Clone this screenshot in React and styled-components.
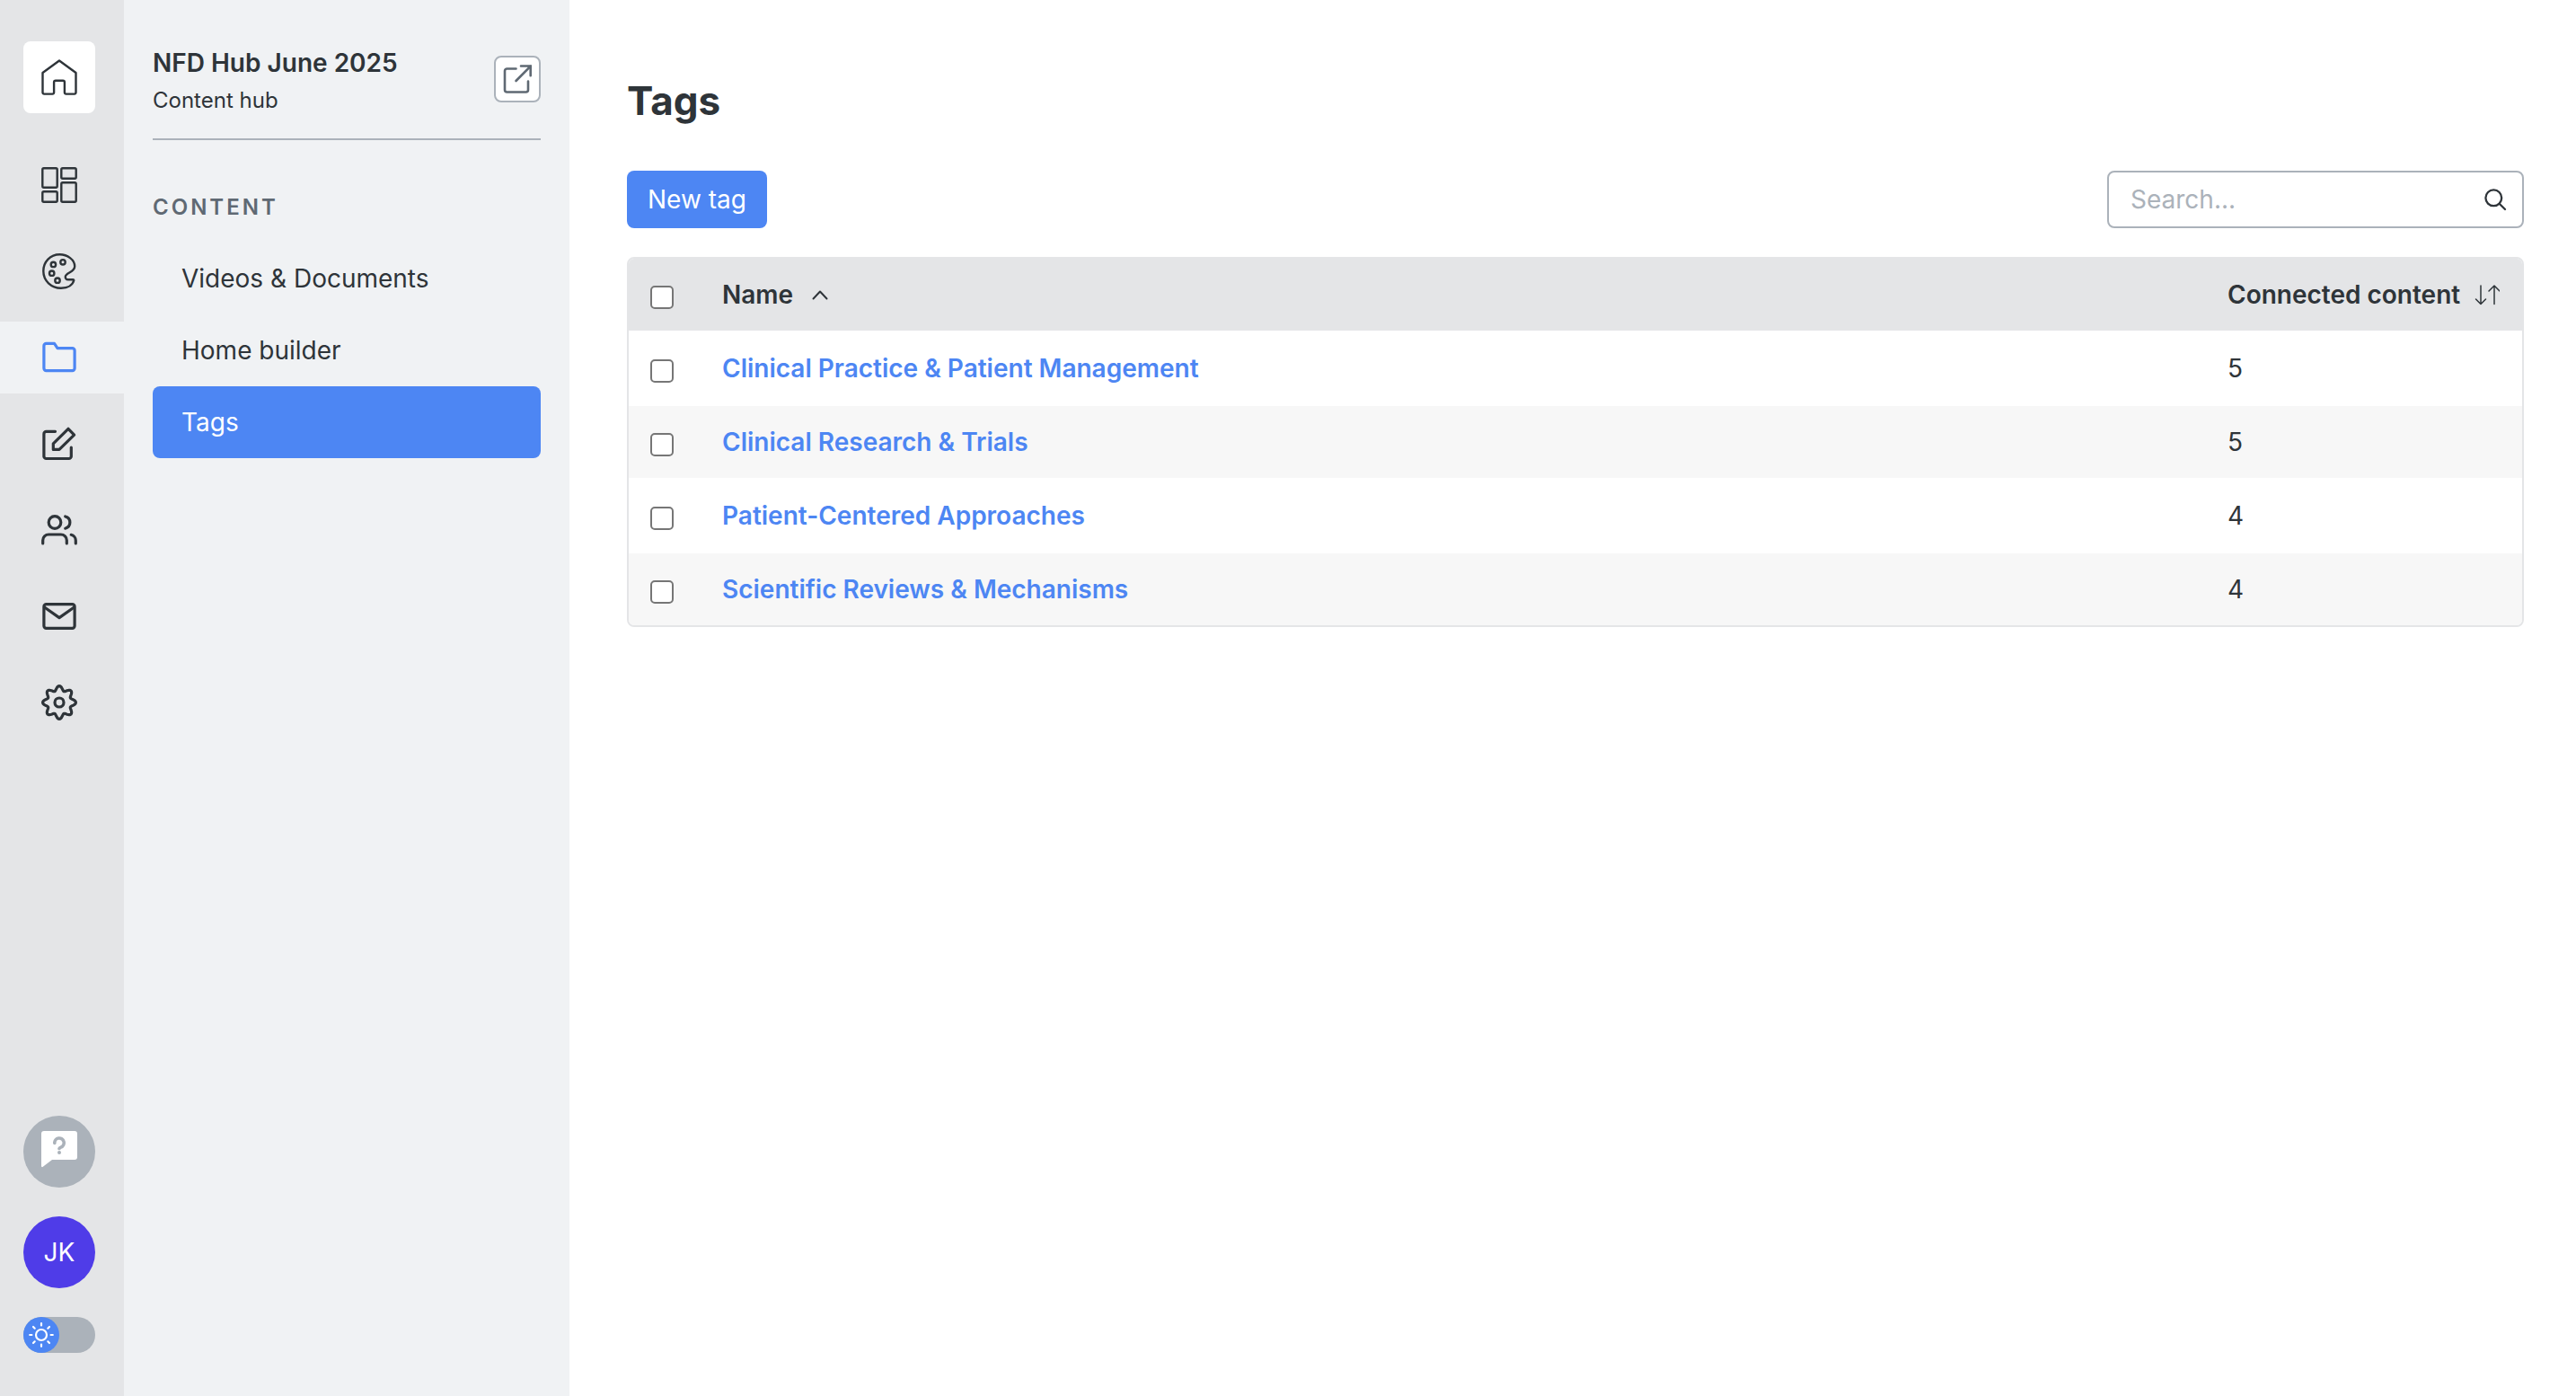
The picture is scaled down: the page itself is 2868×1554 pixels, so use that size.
import React from "react";
import styled, { createGlobalStyle, css } from "styled-components";

const c = {
  text: "#2e3439",
  muted: "#5f6973",
  line: "#abb2ba",
  rail: "#e4e5e7",
  panel: "#f0f2f4",
  blue: "#4d86f3",
  stripe: "#f7f7f7",
  white: "#ffffff",
  avatar: "#4f3ce8",
};

const Global = createGlobalStyle`
  *, *::before, *::after { box-sizing: border-box; }
  body {
    margin: 0;
    background: ${c.white};
    color: ${c.text};
    font-family: Inter, "Liberation Sans", sans-serif;
    font-size: 28px;
    line-height: 40px;
  }
  button, input { font: inherit; color: inherit; }
  a { color: inherit; text-decoration: none; }
`;

const Shell = styled.div`
  display: flex;
  min-height: 100vh;
`;

const Rail = styled.nav`
  display: flex;
  flex-direction: column;
  flex: none;
  width: 138px;
  padding: 46px 0 48px;
  background: ${c.rail};
`;

const HomeLink = styled.a`
  display: flex;
  align-items: center;
  justify-content: center;
  width: 80px;
  height: 80px;
  margin: 0 0 40px 26px;
  border-radius: 8px;
  background: ${c.white};
`;

const RailList = styled.div`
  display: flex;
  flex-direction: column;
  gap: 16px;
`;

const RailLink = styled.a`
  display: flex;
  align-items: center;
  justify-content: center;
  height: 80px;
  padding-right: 6px;
  color: ${(p) => (p.$active ? c.blue : c.text)};
  background: ${(p) => (p.$active ? c.panel : "transparent")};
`;

const RailFooter = styled.div`
  display: flex;
  flex-direction: column;
  gap: 32px;
  margin-top: auto;
  padding-left: 26px;
`;

const RoundButton = styled.button`
  display: flex;
  align-items: center;
  justify-content: center;
  width: 80px;
  height: 80px;
  padding: 0;
  border: 0;
  border-radius: 50%;
  color: ${c.white};
  background: ${(p) => (p.$avatar ? c.avatar : c.line)};
`;

const Switch = styled.label`
  display: flex;
  width: 80px;
  height: 40px;
  border-radius: 20px;
  background: ${c.line};
`;

const HiddenCheck = styled.input`
  appearance: none;
  width: 0;
  height: 0;
  margin: 0;
`;

const Knob = styled.span`
  display: flex;
  align-items: center;
  justify-content: center;
  width: 40px;
  height: 40px;
  border-radius: 50%;
  color: ${c.white};
  background: ${c.blue};
`;

const Panel = styled.aside`
  flex: none;
  width: 496px;
  padding: 50px 32px;
  background: ${c.panel};
`;

const HubHeader = styled.header`
  display: flex;
  align-items: flex-start;
  justify-content: space-between;
  padding-bottom: 20px;
  border-bottom: 2px solid ${c.line};
`;

const HubName = styled.div`
  font-weight: 600;
`;

const HubKind = styled.div`
  font-size: 24px;
  line-height: 44px;
`;

const OpenLink = styled.a`
  display: flex;
  align-items: center;
  justify-content: center;
  width: 52px;
  height: 52px;
  margin-top: 12px;
  border: 2px solid ${c.line};
  border-radius: 8px;
  color: ${c.muted};
  background: ${c.white};
`;

const SectionTitle = styled.h2`
  margin: 55px 0 19px;
  font-size: 24px;
  font-weight: 600;
  letter-spacing: 3px;
  color: ${c.muted};
`;

const MenuLink = styled.a`
  display: flex;
  align-items: center;
  height: 80px;
  padding: 0 32px;
  border-radius: 8px;
  ${(p) =>
    p.$active &&
    css`
      color: ${c.white};
      background: ${c.blue};
    `}
`;

const Main = styled.main`
  flex: 1;
  min-width: 0;
  padding: 80px 58px 64px 64px;
`;

const Title = styled.h1`
  margin: 0 0 46px;
  font-size: 44px;
  font-weight: 700;
  line-height: 64px;
`;

const Toolbar = styled.div`
  display: flex;
  justify-content: space-between;
  margin-bottom: 32px;
`;

const PrimaryButton = styled.button`
  height: 64px;
  padding: 0 23px;
  border: 0;
  border-radius: 8px;
  color: ${c.white};
  background: ${c.blue};
`;

const SearchBox = styled.label`
  display: flex;
  align-items: center;
  width: 464px;
  height: 64px;
  padding: 0 16px 0 24px;
  border: 2px solid ${c.line};
  border-radius: 8px;
`;

const SearchInput = styled.input`
  flex: 1;
  min-width: 0;
  padding: 0;
  border: 0;
  outline: 0;
  background: transparent;
  &::placeholder {
    color: ${c.line};
    opacity: 1;
  }
`;

const TableFrame = styled.div`
  overflow: hidden;
  border: 2px solid ${c.rail};
  border-radius: 8px;
`;

const Table = styled.table`
  width: 100%;
  border-collapse: separate;
  border-spacing: 0;
  text-align: left;
`;

const HeadCell = styled.th`
  height: 80px;
  padding: 0;
  font-weight: 600;
  background: ${c.rail};
`;

const Cell = styled.td`
  height: 80px;
  padding: 0;
`;

const Row = styled.tr`
  background: ${c.white};
  &:nth-child(odd) td {
    height: 84px;
    border: solid ${c.white};
    border-width: 2px 0;
  }
  &:nth-child(even) {
    background: ${c.stripe};
  }
`;

const SelectCol = styled.col`
  width: 104px;
`;

const CountCol = styled.col`
  width: 328px;
`;

const CheckWrap = styled.div`
  display: flex;
  padding: 6px 0 0 24px;
`;

const Check = styled.input`
  appearance: none;
  width: 26px;
  height: 26px;
  margin: 0;
  border: 2px solid #767676;
  border-radius: 5px;
  background: ${c.white};
`;

const SortButton = styled.button`
  display: flex;
  align-items: center;
  gap: ${(p) => p.$gap}px;
  padding: 0;
  border: 0;
  white-space: nowrap;
  background: transparent;
`;

const TagLink = styled.a`
  font-weight: 600;
  color: ${c.blue};
`;

const Icon = ({ size = 40, box = 40, stroke = 2, children }) => (
  <svg
    width={size}
    height={size}
    viewBox={`0 0 ${box} ${box}`}
    fill="none"
    stroke="currentColor"
    strokeWidth={stroke}
    strokeLinecap="round"
    strokeLinejoin="round"
    aria-hidden="true"
  >
    {children}
  </svg>
);

const HomeIcon = () => (
  <Icon stroke={2.4}>
    <path d="M20 1.500 1.500 15V37a1.600 1.600 0 0 0 1.600 1.600h9.400a1.600 1.600 0 0 0 1.600-1.600V25.500a1.800 1.800 0 0 1 1.800-1.800h8.200a1.800 1.800 0 0 1 1.800 1.800V37a1.600 1.600 0 0 0 1.600 1.600h9.400a1.600 1.600 0 0 0 1.600-1.600V15Z" />
  </Icon>
);

const DashboardIcon = () => (
  <Icon stroke={2.4}>
    <rect x="1.300" y="1.300" width="16.400" height="21.400" rx="1.500" />
    <rect x="22.300" y="1.300" width="16.400" height="11.400" rx="1.500" />
    <rect x="1.300" y="27.300" width="16.400" height="11.400" rx="1.500" />
    <rect x="22.300" y="17.300" width="16.400" height="21.400" rx="1.500" />
  </Icon>
);

const PaletteIcon = () => (
  <Icon stroke={2.4}>
    <path d="M20.500 1.300C10 1.300 2.300 9.500 2.300 19.800C2.300 30.500 11 38.700 22 38.700C30 38.700 35 35 36.200 30.300C36.400 29.600 36 29.200 35.300 29.200H30C27.500 29.200 26.600 27.500 26.800 25.800C27.200 21.500 37.200 21 37.200 14.500C37.200 7 29 1.300 20.500 1.300Z" />
    <circle cx="13.400" cy="12.400" r="2.700" />
    <circle cx="24" cy="9.800" r="2.700" />
    <circle cx="11.700" cy="22.200" r="2.700" />
    <circle cx="18" cy="30.200" r="2.700" />
  </Icon>
);

const FolderIcon = () => (
  <Icon stroke={3.2}>
    <path d="M2.900 7A2.600 2.600 0 0 1 5.500 4.400H14.500l3.500 5.200H34.500a2.600 2.600 0 0 1 2.600 2.600V32.100a2.600 2.600 0 0 1-2.600 2.600H5.500a2.600 2.600 0 0 1-2.600-2.600Z" />
  </Icon>
);

const EditIcon = () => (
  <Icon stroke={3.2}>
    <path d="M15.500 6.300H5.500A2.600 2.600 0 0 0 2.900 8.900v25a2.600 2.600 0 0 0 2.600 2.600h25.200a2.600 2.600 0 0 0 2.600-2.600V24" />
    <path d="M13.300 26.400v-6.600L30 3.300l6.600 6.900L20 26.400Z" />
  </Icon>
);

const UsersIcon = () => (
  <Icon stroke={3.2}>
    <circle cx="15" cy="11.500" r="6.800" />
    <path d="M1.700 35v-3.500a6.500 6.500 0 0 1 6.500-6.500h13.600a6.500 6.500 0 0 1 6.500 6.500V35" />
    <path d="M26.700 5a6.800 6.800 0 0 1 0 13.200" />
    <path d="M33.200 25.300a6.500 6.500 0 0 1 5.100 6.500V35" />
  </Icon>
);

const MailIcon = () => (
  <Icon stroke={3.2}>
    <rect x="2.900" y="6.600" width="34.200" height="26.800" rx="2.600" />
    <path d="m3.500 10 16.500 11.600L36.500 10" />
  </Icon>
);

const gearOutline = Array.from({ length: 160 }, (_, i) => {
  const angle = (i / 160) * Math.PI * 2;
  const radius = 15.9 + 2.5 * Math.cos(8 * angle);
  return `${(20 + radius * Math.cos(angle)).toFixed(2)},${(20 + radius * Math.sin(angle)).toFixed(2)}`;
}).join(" ");

const SettingsIcon = () => (
  <Icon stroke={3.2}>
    <polygon points={gearOutline} />
    <circle cx="20" cy="20" r="5" />
  </Icon>
);

const HelpIcon = () => (
  <svg width="40" height="48" viewBox="0 0 40 48" aria-hidden="true">
    <path d="M3 1H37a3 3 0 0 1 3 3V30a3 3 0 0 1-3 3H12L1.500 41Q0 41.500 0 40V4A3 3 0 0 1 3 1Z" fill="#fff" />
    <path d="M14.800 14.500a5.200 5.200 0 1 1 7 4.600q-1.700.6-1.800 1.400" fill="none" stroke={c.line} strokeWidth="3.600" strokeLinecap="round" />
    <circle cx="20" cy="25" r="2" fill={c.line} />
  </svg>
);

const SunIcon = () => (
  <Icon size={28} box={28} stroke={2.2}>
    <circle cx="14" cy="14" r="6" />
    <path d="M14 1.200v2.200M14 24.600v2.200M1.200 14h2.200M24.600 14h2.200M5 5l1.700 1.700M21.300 21.300 23 23M5 23l1.700-1.700M21.300 6.700 23 5" />
  </Icon>
);

const ExternalIcon = () => (
  <Icon size={34} box={34} stroke={2.6}>
    <path d="M15.500 5.500H5.500A2.500 2.500 0 0 0 3 8v21a2.500 2.500 0 0 0 2.500 2.500h21A2.500 2.500 0 0 0 29 29V19.500" />
    <path d="M15.500 19 31.500 2.800" />
    <path d="M21 2.500H31.700V13.200" strokeLinejoin="miter" />
    <path d="M27.500 2.500h4.200v4.200Z" fill="currentColor" stroke="none" />
  </Icon>
);

const SearchIcon = () => (
  <Icon size={28} box={28} stroke={2.3}>
    <circle cx="12.300" cy="12.300" r="8.900" />
    <path d="m18.700 18.700 6.300 6.300" />
  </Icon>
);

const CaretIcon = () => (
  <Icon size={20} box={20} stroke={2}>
    <path d="m2.500 14.500 7.500-8 7.500 8" />
  </Icon>
);

const SortIcon = () => (
  <Icon size={28} box={28} stroke={1.5}>
    <path d="M7 4v20.500M1.500 19l5.500 5.500 5.500-5.500" />
    <path d="M22 24.500V4M16 10l6-6 6 6" />
  </Icon>
);

const railItems = [
  ["Dashboard", DashboardIcon],
  ["Design", PaletteIcon],
  ["Content", FolderIcon],
  ["Forms", EditIcon],
  ["Users", UsersIcon],
  ["Messages", MailIcon],
  ["Settings", SettingsIcon],
];

const menu = ["Videos & Documents", "Home builder", "Tags"];

const tags = [
  { name: "Clinical Practice & Patient Management", count: 5 },
  { name: "Clinical Research & Trials", count: 5 },
  { name: "Patient-Centered Approaches", count: 4 },
  { name: "Scientific Reviews & Mechanisms", count: 4 },
];

export default function App() {
  return (
    <>
      <Global />
      <Shell>
        <Rail aria-label="Main">
          <HomeLink href="#home" aria-label="Home">
            <HomeIcon />
          </HomeLink>
          <RailList>
            {railItems.map(([label, Glyph]) => (
              <RailLink key={label} href="#" aria-label={label} $active={label === "Content"}>
                <Glyph />
              </RailLink>
            ))}
          </RailList>
          <RailFooter>
            <RoundButton type="button" aria-label="Help">
              <HelpIcon />
            </RoundButton>
            <RoundButton type="button" $avatar>
              JK
            </RoundButton>
            <Switch>
              <HiddenCheck type="checkbox" role="switch" aria-label="Dark mode" />
              <Knob>
                <SunIcon />
              </Knob>
            </Switch>
          </RailFooter>
        </Rail>

        <Panel>
          <HubHeader>
            <div>
              <HubName>NFD Hub June 2025</HubName>
              <HubKind>Content hub</HubKind>
            </div>
            <OpenLink href="#open" aria-label="Open hub">
              <ExternalIcon />
            </OpenLink>
          </HubHeader>
          <SectionTitle>CONTENT</SectionTitle>
          <nav aria-label="Content">
            {menu.map((item) => (
              <MenuLink key={item} href="#" $active={item === "Tags"}>
                {item}
              </MenuLink>
            ))}
          </nav>
        </Panel>

        <Main>
          <Title>Tags</Title>
          <Toolbar>
            <PrimaryButton type="button">New tag</PrimaryButton>
            <SearchBox>
              <SearchInput type="text" placeholder="Search..." aria-label="Search tags" />
              <SearchIcon />
            </SearchBox>
          </Toolbar>
          <TableFrame>
            <Table>
              <colgroup>
                <SelectCol />
                <col />
                <CountCol />
              </colgroup>
              <thead>
                <tr>
                  <HeadCell>
                    <CheckWrap>
                      <Check type="checkbox" aria-label="Select all tags" />
                    </CheckWrap>
                  </HeadCell>
                  <HeadCell>
                    <SortButton type="button" $gap={20}>
                      Name
                      <CaretIcon />
                    </SortButton>
                  </HeadCell>
                  <HeadCell>
                    <SortButton type="button" $gap={16}>
                      Connected content
                      <SortIcon />
                    </SortButton>
                  </HeadCell>
                </tr>
              </thead>
              <tbody>
                {tags.map((tag) => (
                  <Row key={tag.name}>
                    <Cell>
                      <CheckWrap>
                        <Check type="checkbox" aria-label={`Select ${tag.name}`} />
                      </CheckWrap>
                    </Cell>
                    <Cell>
                      <TagLink href="#">{tag.name}</TagLink>
                    </Cell>
                    <Cell>{tag.count}</Cell>
                  </Row>
                ))}
              </tbody>
            </Table>
          </TableFrame>
        </Main>
      </Shell>
    </>
  );
}
